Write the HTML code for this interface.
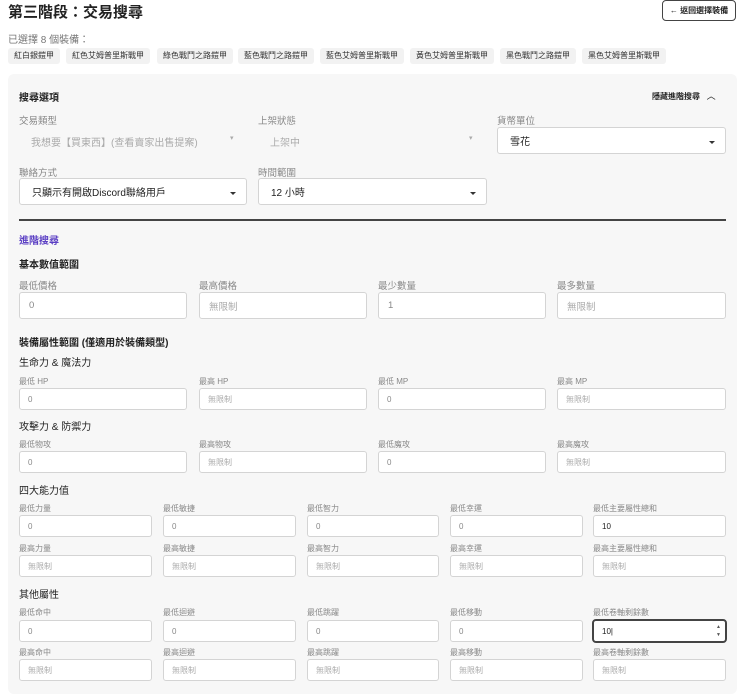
<!DOCTYPE html>
<html><head><meta charset="utf-8"><style>
*{box-sizing:border-box;margin:0;padding:0}
body{width:740px;height:684px;overflow:hidden;background:#fff;font-family:"Liberation Sans","Noto Sans CJK TC",sans-serif;color:#222;position:relative}
.a{position:absolute;white-space:nowrap}
.t{font-size:15px;font-weight:bold;color:#222}
.btn{border:1px solid #444;border-radius:4px;font-size:8px;font-weight:bold;display:flex;align-items:center;justify-content:center;background:#fff}
.g{font-size:10px;color:#777}
.chip{background:#f2f2f2;border-radius:3px;font-size:8px;color:#333;height:16px;line-height:16px;padding:0 6px}
.panel{left:8px;top:74px;width:729px;height:620px;background:#f7f7f7;border-radius:6px}
.h{font-size:10px;font-weight:bold;color:#222}
.lb{font-size:9.5px;color:#888}
.ls{font-size:8px;color:#888}
.sel{background:#fff;border:1px solid #d4d4d4;border-radius:3px;font-size:10px;color:#222;padding-left:12px;display:flex;align-items:center}
.sel:after{content:"";position:absolute;right:10px;top:50%;border:3px solid transparent;border-top:3px solid #333;border-bottom:0}
.dis{font-size:10px;color:#aaa}
.in{background:#fff;border:1px solid #d4d4d4;border-radius:3px;font-size:9.5px;color:#888;padding-left:9px;display:flex;align-items:center}
.in.s{font-size:8px;padding-left:8px}
.ph{color:#aaa}
</style></head><body>
<div class="a t" style="left:8px;top:1px">第三階段：交易搜尋</div>
<div class="a btn" style="left:662px;top:0;width:74px;height:21px">← 返回選擇裝備</div>
<div class="a g" style="left:8px;top:31px">已選擇 8 個裝備：</div>
<div class="a chip" style="left:8px;top:48px">紅白銀鎧甲</div>
<div class="a chip" style="left:66px;top:48px">紅色艾姆普里斯戰甲</div>
<div class="a chip" style="left:157px;top:48px">綠色戰鬥之路鎧甲</div>
<div class="a chip" style="left:238px;top:48px">藍色戰鬥之路鎧甲</div>
<div class="a chip" style="left:320px;top:48px">藍色艾姆普里斯戰甲</div>
<div class="a chip" style="left:410px;top:48px">黃色艾姆普里斯戰甲</div>
<div class="a chip" style="left:500px;top:48px">黑色戰鬥之路鎧甲</div>
<div class="a chip" style="left:582px;top:48px">黑色艾姆普里斯戰甲</div>
<div class="a panel"></div>
<div class="a h" style="left:19px;top:89px">搜尋選項</div>
<div class="a" style="left:652px;top:89px;font-size:8px;font-weight:bold">隱藏進階搜尋 &nbsp;&nbsp;<span style="font-weight:normal;font-size:9px">︿</span></div>
<div class="a lb" style="left:19px;top:113px">交易類型</div>
<div class="a lb" style="left:258px;top:113px">上架狀態</div>
<div class="a lb" style="left:497px;top:113px">貨幣單位</div>
<div class="a dis" style="left:31px;top:134px">我想要【買東西】(查看賣家出售提案)</div>
<div class="a dis" style="left:230px;top:134px;font-size:7px">▾</div>
<div class="a dis" style="left:270px;top:134px">上架中</div>
<div class="a dis" style="left:469px;top:134px;font-size:7px">▾</div>
<div class="a sel" style="left:497px;top:127px;width:229px;height:27px">雪花</div>
<div class="a lb" style="left:19px;top:165px">聯絡方式</div>
<div class="a lb" style="left:258px;top:165px">時間範圍</div>
<div class="a sel" style="left:19px;top:178px;width:228px;height:27px">只顯示有開啟Discord聯絡用戶</div>
<div class="a sel" style="left:258px;top:178px;width:229px;height:27px">12 小時</div>
<div class="a" style="left:19px;top:219px;width:707px;height:1.5px;background:#444"></div>
<div class="a h" style="left:19px;top:232px;color:#5b3fc4">進階搜尋</div>
<div class="a h" style="left:19px;top:256px">基本數值範圍</div>
<div class="a lb" style="left:19px;top:278px">最低價格</div>
<div class="a lb" style="left:199px;top:278px">最高價格</div>
<div class="a lb" style="left:378px;top:278px">最少數量</div>
<div class="a lb" style="left:557px;top:278px">最多數量</div>
<div class="a in" style="left:19px;top:292px;width:168px;height:27px">0</div>
<div class="a in ph" style="left:199px;top:292px;width:168px;height:27px">無限制</div>
<div class="a in" style="left:378px;top:292px;width:168px;height:27px">1</div>
<div class="a in ph" style="left:557px;top:292px;width:169px;height:27px">無限制</div>
<div class="a h" style="left:19px;top:334px">裝備屬性範圍 (僅適用於裝備類型)</div>
<div class="a h" style="left:19px;top:354px;font-weight:normal">生命力 &amp; 魔法力</div>
<div class="a ls" style="left:19px;top:376px">最低 HP</div>
<div class="a ls" style="left:199px;top:376px">最高 HP</div>
<div class="a ls" style="left:378px;top:376px">最低 MP</div>
<div class="a ls" style="left:557px;top:376px">最高 MP</div>
<div class="a in s" style="left:19px;top:388px;width:168px;height:22px">0</div>
<div class="a in s ph" style="left:199px;top:388px;width:168px;height:22px">無限制</div>
<div class="a in s" style="left:378px;top:388px;width:168px;height:22px">0</div>
<div class="a in s ph" style="left:557px;top:388px;width:169px;height:22px">無限制</div>
<div class="a h" style="left:19px;top:418px;font-weight:normal">攻擊力 &amp; 防禦力</div>
<div class="a ls" style="left:19px;top:439px">最低物攻</div>
<div class="a ls" style="left:199px;top:439px">最高物攻</div>
<div class="a ls" style="left:378px;top:439px">最低魔攻</div>
<div class="a ls" style="left:557px;top:439px">最高魔攻</div>
<div class="a in s" style="left:19px;top:451px;width:168px;height:22px">0</div>
<div class="a in s ph" style="left:199px;top:451px;width:168px;height:22px">無限制</div>
<div class="a in s" style="left:378px;top:451px;width:168px;height:22px">0</div>
<div class="a in s ph" style="left:557px;top:451px;width:169px;height:22px">無限制</div>
<div class="a h" style="left:19px;top:482px;font-weight:normal">四大能力值</div>
<div class="a ls" style="left:19px;top:503px">最低力量</div>
<div class="a ls" style="left:163px;top:503px">最低敏捷</div>
<div class="a ls" style="left:307px;top:503px">最低智力</div>
<div class="a ls" style="left:450px;top:503px">最低幸運</div>
<div class="a ls" style="left:593px;top:503px">最低主要屬性總和</div>
<div class="a in s" style="left:19px;top:515px;width:133px;height:22px">0</div>
<div class="a in s" style="left:163px;top:515px;width:133px;height:22px">0</div>
<div class="a in s" style="left:307px;top:515px;width:132px;height:22px">0</div>
<div class="a in s" style="left:450px;top:515px;width:133px;height:22px">0</div>
<div class="a in s" style="left:593px;top:515px;width:133px;height:22px;color:#222">10</div>
<div class="a ls" style="left:19px;top:543px">最高力量</div>
<div class="a ls" style="left:163px;top:543px">最高敏捷</div>
<div class="a ls" style="left:307px;top:543px">最高智力</div>
<div class="a ls" style="left:450px;top:543px">最高幸運</div>
<div class="a ls" style="left:593px;top:543px">最高主要屬性總和</div>
<div class="a in s ph" style="left:19px;top:555px;width:133px;height:22px">無限制</div>
<div class="a in s ph" style="left:163px;top:555px;width:133px;height:22px">無限制</div>
<div class="a in s ph" style="left:307px;top:555px;width:132px;height:22px">無限制</div>
<div class="a in s ph" style="left:450px;top:555px;width:133px;height:22px">無限制</div>
<div class="a in s ph" style="left:593px;top:555px;width:133px;height:22px">無限制</div>
<div class="a h" style="left:19px;top:586px;font-weight:normal">其他屬性</div>
<div class="a ls" style="left:19px;top:607px">最低命中</div>
<div class="a ls" style="left:163px;top:607px">最低迴避</div>
<div class="a ls" style="left:307px;top:607px">最低跳躍</div>
<div class="a ls" style="left:450px;top:607px">最低移動</div>
<div class="a ls" style="left:593px;top:607px">最低卷軸剩餘數</div>
<div class="a in s" style="left:19px;top:620px;width:133px;height:22px">0</div>
<div class="a in s" style="left:163px;top:620px;width:133px;height:22px">0</div>
<div class="a in s" style="left:307px;top:620px;width:132px;height:22px">0</div>
<div class="a in s" style="left:450px;top:620px;width:133px;height:22px">0</div>
<div class="a in s" style="left:592px;top:619px;width:135px;height:24px;color:#222;border:2px solid #444;border-radius:4px">10|<span style="position:absolute;right:4px;top:2px;font-size:5px;line-height:8px;color:#555">▲<br>▼</span></div>
<div class="a ls" style="left:19px;top:647px">最高命中</div>
<div class="a ls" style="left:163px;top:647px">最高迴避</div>
<div class="a ls" style="left:307px;top:647px">最高跳躍</div>
<div class="a ls" style="left:450px;top:647px">最高移動</div>
<div class="a ls" style="left:593px;top:647px">最高卷軸剩餘數</div>
<div class="a in s ph" style="left:19px;top:659px;width:133px;height:22px">無限制</div>
<div class="a in s ph" style="left:163px;top:659px;width:133px;height:22px">無限制</div>
<div class="a in s ph" style="left:307px;top:659px;width:132px;height:22px">無限制</div>
<div class="a in s ph" style="left:450px;top:659px;width:133px;height:22px">無限制</div>
<div class="a in s ph" style="left:593px;top:659px;width:133px;height:22px">無限制</div>
</body></html>
